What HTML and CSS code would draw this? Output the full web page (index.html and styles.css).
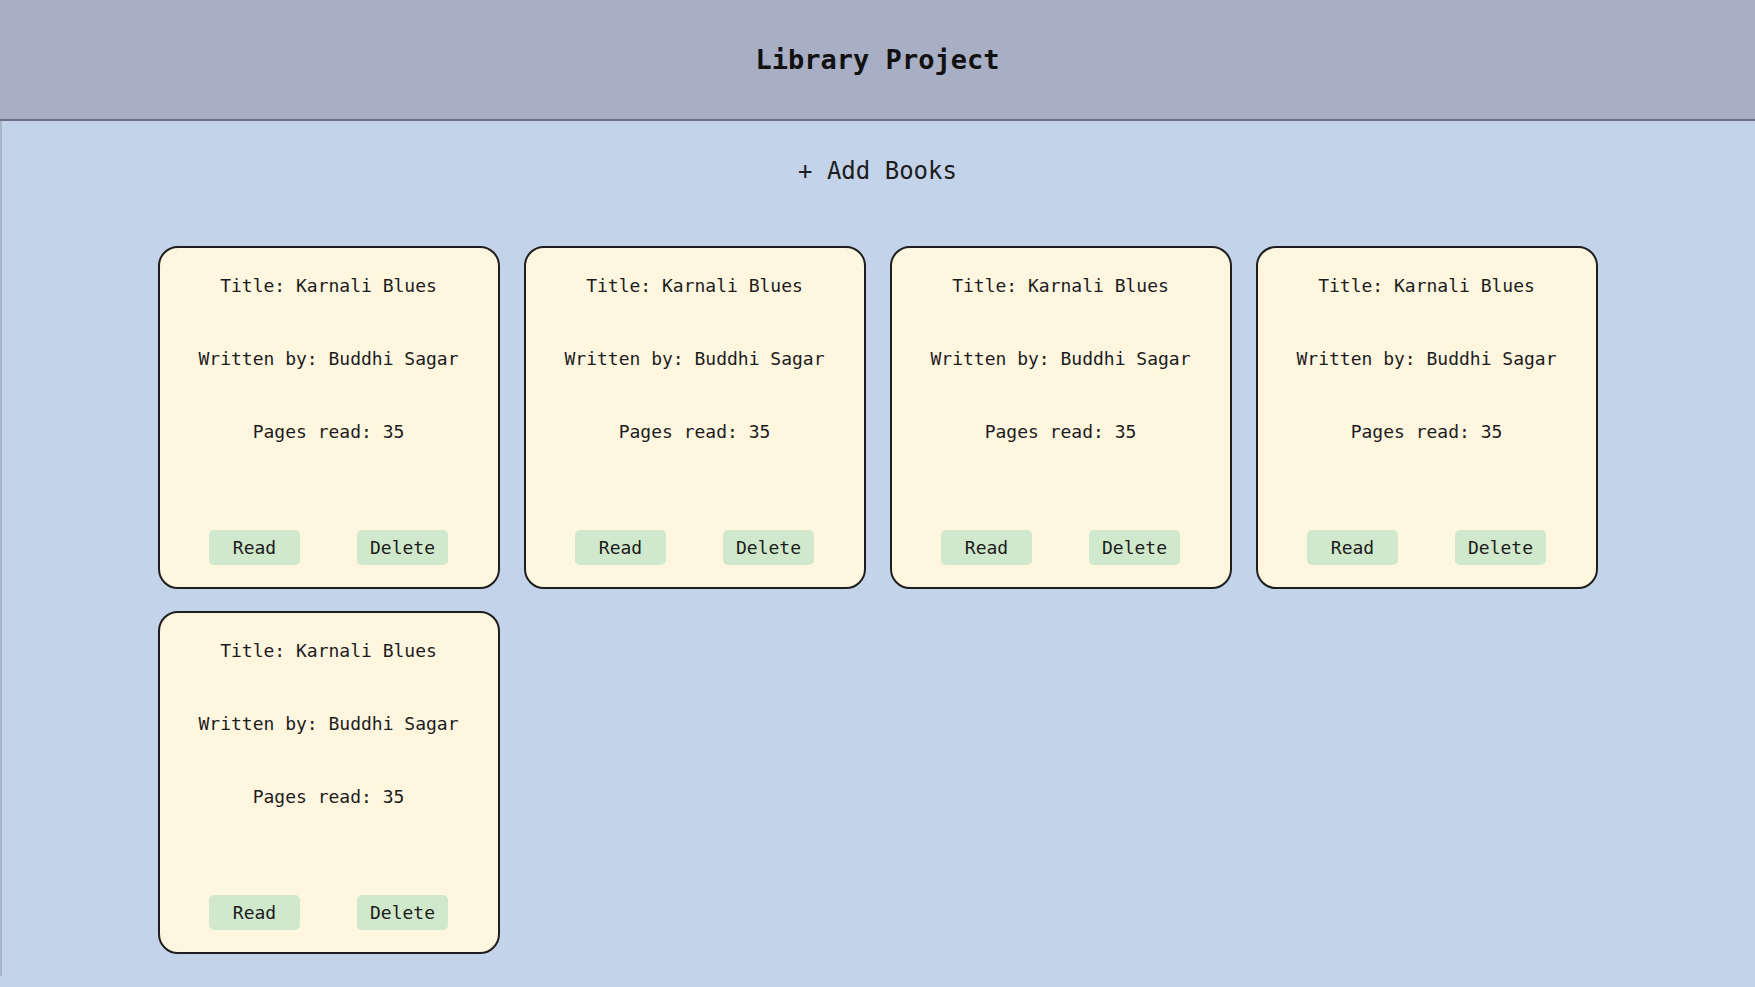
FILE: index.html
```html
<!DOCTYPE html>
<html lang="en">
<head>
<meta charset="UTF-8">
<title>Library Project</title>
<link rel="stylesheet" href="styles.css">
</head>
<body>
<header class="top">
  <h1 class="brand">Library Project</h1>
</header>
<main class="main">
  <button class="add-btn">+ Add Books</button>
  <section class="grid">
    <article class="card">
      <p>Title: Karnali Blues</p>
      <p>Written by: Buddhi Sagar</p>
      <p>Pages read: 35</p>
      <div class="actions"><button class="btn">Read</button><button class="btn">Delete</button></div>
    </article>
    <article class="card">
      <p>Title: Karnali Blues</p>
      <p>Written by: Buddhi Sagar</p>
      <p>Pages read: 35</p>
      <div class="actions"><button class="btn">Read</button><button class="btn">Delete</button></div>
    </article>
    <article class="card">
      <p>Title: Karnali Blues</p>
      <p>Written by: Buddhi Sagar</p>
      <p>Pages read: 35</p>
      <div class="actions"><button class="btn">Read</button><button class="btn">Delete</button></div>
    </article>
    <article class="card">
      <p>Title: Karnali Blues</p>
      <p>Written by: Buddhi Sagar</p>
      <p>Pages read: 35</p>
      <div class="actions"><button class="btn">Read</button><button class="btn">Delete</button></div>
    </article>
    <article class="card">
      <p>Title: Karnali Blues</p>
      <p>Written by: Buddhi Sagar</p>
      <p>Pages read: 35</p>
      <div class="actions"><button class="btn">Read</button><button class="btn">Delete</button></div>
    </article>
  </section>
</main>
</body>
</html>
```
FILE: styles.css
```css
* { box-sizing: border-box; }
html, body {
  margin: 0;
  padding: 0;
  background: #c3d3ea;
  font-family: "DejaVu Sans Mono", "Liberation Mono", monospace;
  color: #1c1c1c;
}
.top {
  height: 121px;
  background: #a8aec3;
  border-bottom: 2px solid #6b7183;
  display: flex;
  align-items: center;
  justify-content: center;
}
.brand {
  margin: 0;
  font-size: 27px;
  font-weight: bold;
  color: #111;
  line-height: 1;
}
.main {
  height: 855px;
  box-shadow: inset 2px 0 0 #a9b5c8;
  display: flex;
  flex-direction: column;
  align-items: center;
  padding-top: 36px;
}
.add-btn {
  background: none;
  border: none;
  font-family: inherit;
  font-size: 24px;
  line-height: 28px;
  color: #1c1c1c;
  padding: 0;
  cursor: pointer;
}
.grid {
  margin-top: 61px;
  display: grid;
  grid-template-columns: repeat(4, 342px);
  column-gap: 24px;
  row-gap: 22px;
}
.card {
  height: 343px;
  background: #fff6e0;
  border: 2px solid #1e1e1e;
  border-radius: 20px;
  display: flex;
  flex-direction: column;
  align-items: center;
  padding: 27px 0 22px;
}
.card p {
  margin: 0;
  font-size: 18px;
  line-height: 21px;
}
.card p + p { margin-top: 52px; }
.actions {
  margin-top: auto;
  display: flex;
  gap: 57px;
  justify-content: center;
}
.btn {
  width: 91px;
  height: 35px;
  background: #d0e8cb;
  border: none;
  border-radius: 5px;
  font-family: inherit;
  font-size: 18px;
  color: #1c1c1c;
  padding: 0;
}
```
